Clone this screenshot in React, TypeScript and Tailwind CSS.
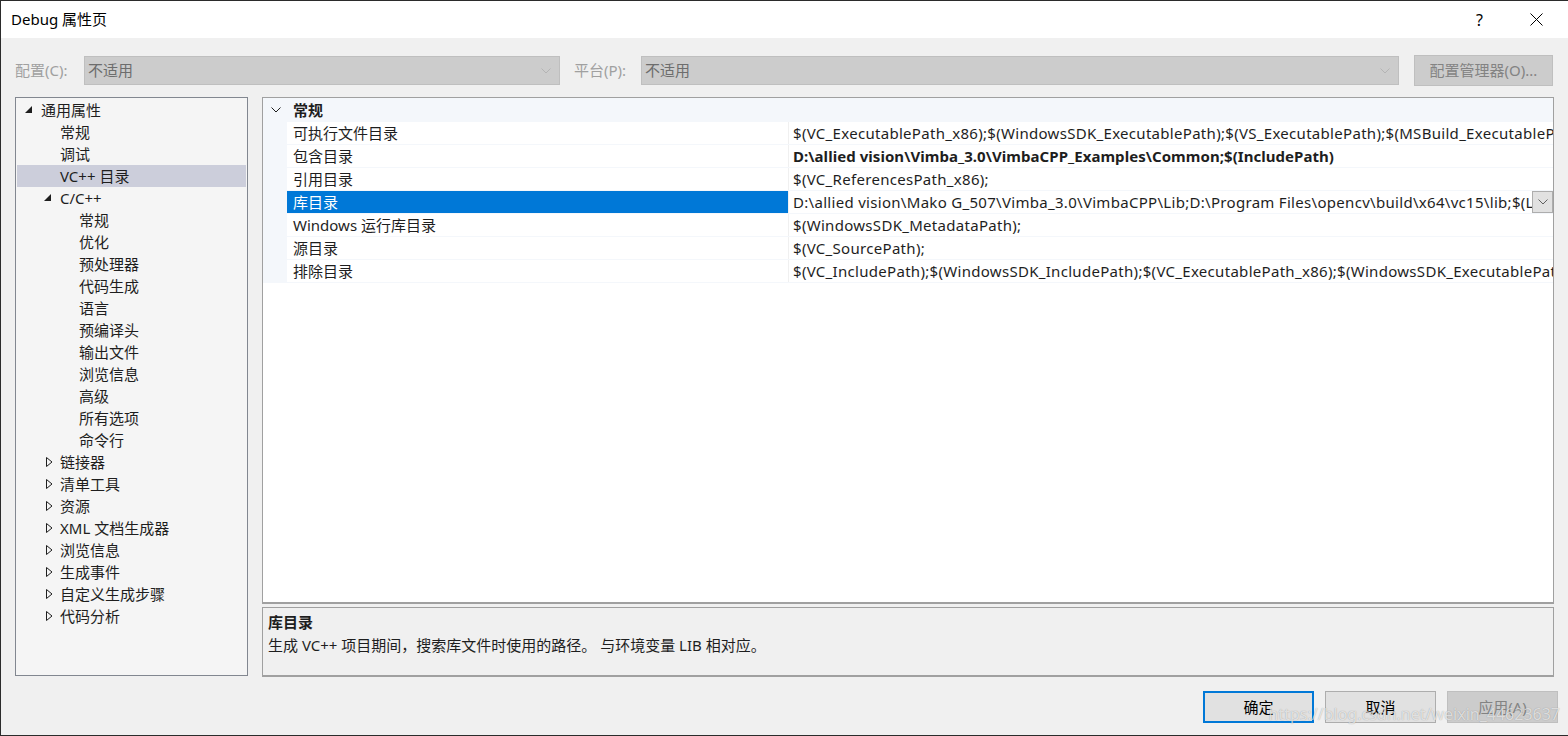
import React from 'react';

const font = "font-['Noto_Sans','Noto_Sans_CJK_SC',sans-serif]";

type TreeItem = { label: string; level: number; kind?: 'open' | 'closed'; selected?: boolean };

const treeItems: TreeItem[] = [
  { label: '通用属性', level: 0, kind: 'open' },
  { label: '常规', level: 1 },
  { label: '调试', level: 1 },
  { label: 'VC++ 目录', level: 1, selected: true },
  { label: 'C/C++', level: 1, kind: 'open' },
  { label: '常规', level: 2 },
  { label: '优化', level: 2 },
  { label: '预处理器', level: 2 },
  { label: '代码生成', level: 2 },
  { label: '语言', level: 2 },
  { label: '预编译头', level: 2 },
  { label: '输出文件', level: 2 },
  { label: '浏览信息', level: 2 },
  { label: '高级', level: 2 },
  { label: '所有选项', level: 2 },
  { label: '命令行', level: 2 },
  { label: '链接器', level: 1, kind: 'closed' },
  { label: '清单工具', level: 1, kind: 'closed' },
  { label: '资源', level: 1, kind: 'closed' },
  { label: 'XML 文档生成器', level: 1, kind: 'closed' },
  { label: '浏览信息', level: 1, kind: 'closed' },
  { label: '生成事件', level: 1, kind: 'closed' },
  { label: '自定义生成步骤', level: 1, kind: 'closed' },
  { label: '代码分析', level: 1, kind: 'closed' },
];

const indent = ['pl-[8px]', 'pl-[27px]', 'pl-[46px]'];

const props = [
  { name: '可执行文件目录', value: '$(VC_ExecutablePath_x86);$(WindowsSDK_ExecutablePath);$(VS_ExecutablePath);$(MSBuild_ExecutablePath);$(FxCopDir);$(PATH);' },
  { name: '包含目录', value: 'D:\\allied vision\\Vimba_3.0\\VimbaCPP_Examples\\Common;$(IncludePath)', bold: true },
  { name: '引用目录', value: '$(VC_ReferencesPath_x86);' },
  { name: '库目录', value: 'D:\\allied vision\\Mako G_507\\Vimba_3.0\\VimbaCPP\\Lib;D:\\Program Files\\opencv\\build\\x64\\vc15\\lib;$(LibraryPath)', selected: true },
  { name: 'Windows 运行库目录', value: '$(WindowsSDK_MetadataPath);' },
  { name: '源目录', value: '$(VC_SourcePath);' },
  { name: '排除目录', value: '$(VC_IncludePath);$(WindowsSDK_IncludePath);$(VC_ExecutablePath_x86);$(WindowsSDK_ExecutablePath);$(MSBuildToolsPath)' },
];

const Chevron = ({ color }: { color: string }) => (
  <svg width="10" height="6" viewBox="0 0 10 6">
    <polyline points="0.5,0.5 5,5 9.5,0.5" fill="none" stroke={color} strokeWidth="1" />
  </svg>
);

const Combo = ({ width }: { width: string }) => (
  <div className={`${width} h-[29px] bg-[#cccccc] border border-[#bfbfbf] flex items-center pl-[3px] pr-[8px]`}>
    <span className="flex-1 text-[15px] text-[#6d6d6d]">不适用</span>
    <Chevron color="#b4b4b4" />
  </div>
);

export default function App() {
  return (
    <div className={`w-[1568px] h-[736px] bg-[#f0f0f0] border-l border-t border-b border-[#2b2b2b] flex flex-col overflow-hidden ${font} text-[#1e1e1e] leading-none`}>
      {/* title bar */}
      <div className="h-[37px] bg-white flex items-center pl-[10px] pr-[25px] shrink-0">
        <span className="flex-1 text-[15px] text-black">Debug 属性页</span>
        <span className="text-[16px] text-black mr-[47px]">?</span>
        <svg width="13" height="13" viewBox="0 0 13 13">
          <path d="M0.5 0.5 L12.5 12.5 M12.5 0.5 L0.5 12.5" stroke="#000" strokeWidth="1" />
        </svg>
      </div>

      {/* configuration row */}
      <div className="mt-[17px] h-[31px] flex items-center pl-[14px] shrink-0">
        <span className="w-[69px] text-[15px] text-[#a0a0a0]">配置(C):</span>
        <Combo width="w-[476px]" />
        <span className="ml-[14px] w-[67px] text-[15px] text-[#a0a0a0]">平台(P):</span>
        <Combo width="w-[758px]" />
        <div className="ml-[15px] w-[139px] h-[31px] bg-[#cccccc] border border-[#bfbfbf] flex items-center justify-center text-[15px] text-[#838383]">
          配置管理器(O)...
        </div>
      </div>

      {/* main area */}
      <div className="mt-[11px] h-[580px] flex pl-[14px] shrink-0">
        {/* tree */}
        <div className="w-[233px] h-[579px] border border-[#828790] bg-[#f5f5f5] p-[1px]">
          {treeItems.map((item, i) => (
            <div
              key={i}
              className={`h-[22px] flex items-center ${indent[item.level]} ${item.selected ? 'bg-[#cccedb]' : ''}`}
            >
              <div className="w-[16px] h-[22px] flex items-center">
                {item.kind === 'open' && (
                  <svg width="7" height="7" viewBox="0 0 7 7" className="mb-[2px]">
                    <polygon points="7,0 7,7 0,7" fill="#1e1e1e" />
                  </svg>
                )}
                {item.kind === 'closed' && (
                  <svg width="7" height="10" viewBox="0 0 7 10" className="ml-[2px]">
                    <polygon points="0.5,0.5 6,5 0.5,9.5" fill="none" stroke="#1e1e1e" strokeWidth="1" />
                  </svg>
                )}
              </div>
              <span className="text-[15px] whitespace-nowrap">{item.label}</span>
            </div>
          ))}
        </div>

        {/* right side */}
        <div className="ml-[14px] w-[1292px] flex flex-col">
          <div className="h-[508px] border border-b-2 border-[#a0a0a0] bg-white overflow-hidden">
            <div className="h-[24px] bg-[#f4f7fb] flex items-center">
              <div className="w-[24px] flex justify-center pl-[1px]">
                <Chevron color="#1e1e1e" />
              </div>
              <span className="pl-[6px] text-[15px] font-bold">常规</span>
            </div>
            {props.map((p, i) => (
              <div key={i} className="h-[23px] flex bg-[#f4f7fb]">
                <div className="w-[24px] shrink-0" />
                <div
                  className={`w-[501px] shrink-0 h-[22px] flex items-center pl-[6px] text-[15px] whitespace-nowrap ${p.selected ? 'bg-[#0078d7] text-white' : 'bg-white'}`}
                >
                  {p.name}
                </div>
                <div className="w-[1px] h-[22px] bg-[#f0f0f0] shrink-0" />
                <div className="flex-1 h-[22px] bg-white flex items-center min-w-0 relative overflow-hidden">
                  <span
                    className={`pl-[4px] text-[15px] leading-[20px] whitespace-nowrap ${p.bold ? 'font-bold tracking-[0.05px]' : 'tracking-[0.3px]'}`}
                  >
                    {p.value}
                  </span>
                  {p.selected && (
                    <div className="absolute right-0 top-0 w-[21px] h-[22px] bg-[#e1e1e1] border border-[#adadad] flex items-center justify-center">
                      <Chevron color="#606060" />
                    </div>
                  )}
                </div>
              </div>
            ))}
          </div>

          <div className="mt-[3px] h-[70px] border border-b-2 border-[#a0a0a0] bg-[#f0f0f0] pl-[5px] pt-[6px]">
            <div className="text-[15px] font-bold h-[16px] flex items-center">库目录</div>
            <div className="mt-[7px] text-[15px] h-[16px] flex items-center whitespace-nowrap">
              生成 VC++ 项目期间，搜索库文件时使用的路径。 与环境变量 LIB 相对应。
            </div>
          </div>
        </div>
      </div>

      {/* buttons */}
      <div className="relative mt-[14px] h-[32px] flex justify-end gap-[11px] pr-[10px] shrink-0">
        <div className="w-[111px] h-[32px] bg-[#e1e1e1] border-2 border-[#0078d7] flex items-center justify-center text-[15px] text-black">
          确定
        </div>
        <div className="w-[111px] h-[32px] bg-[#e1e1e1] border border-[#adadad] flex items-center justify-center text-[15px] text-black">
          取消
        </div>
        <div className="w-[111px] h-[32px] bg-[#cccccc] border border-[#bfbfbf] flex items-center justify-center text-[15px] text-[#838383]">
          应用(A)
        </div>
        <span className="absolute right-[8px] top-[15px] text-[16px] text-white/70 [text-shadow:0_0_1px_rgba(0,0,0,0.35)] whitespace-nowrap pointer-events-none">
          https://blog.csdn.net/weixin_44623637
        </span>
      </div>
    </div>
  );
}
